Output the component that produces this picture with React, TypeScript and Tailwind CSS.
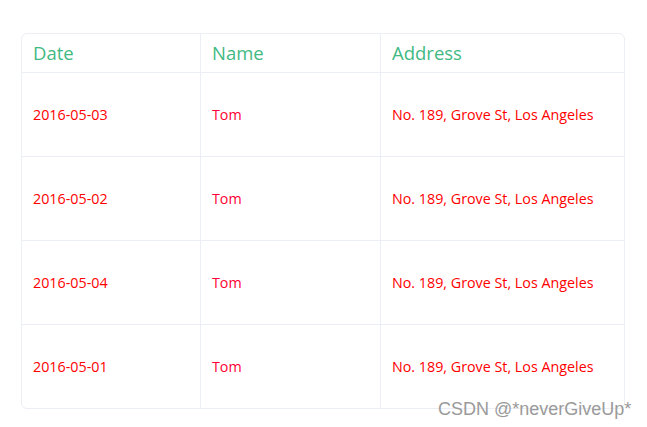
const rows = [
  { date: '2016-05-03', name: 'Tom', address: 'No. 189, Grove St, Los Angeles' },
  { date: '2016-05-02', name: 'Tom', address: 'No. 189, Grove St, Los Angeles' },
  { date: '2016-05-04', name: 'Tom', address: 'No. 189, Grove St, Los Angeles' },
  { date: '2016-05-01', name: 'Tom', address: 'No. 189, Grove St, Los Angeles' },
];

export default function App() {
  return (
    <div className="relative w-[647px] h-[427px] bg-white overflow-hidden" style={{ fontFamily: '"Open Sans", "Noto Sans", sans-serif' }}>
      <div className="pt-[33px] pl-[21px]">
        <table className="w-[604px] border-separate border-spacing-0 border border-[#ebeef5] rounded-[6px] table-fixed">
          <colgroup>
            <col className="w-[179px]" />
            <col className="w-[180px]" />
            <col />
          </colgroup>
          <thead>
            <tr className="h-[39px]">
              {['Date', 'Name', 'Address'].map((h, i) => (
                <th
                  key={h}
                  className={`text-left font-normal text-[18.5px] text-[#42b983] px-[11px] border-b border-[#ebeef5] ${i < 2 ? 'border-r' : ''}`}
                >
                  {h}
                </th>
              ))}
            </tr>
          </thead>
          <tbody>
            {rows.map((r, idx) => (
              <tr key={idx} className={idx < 3 ? 'h-[84px]' : 'h-[83px]'}>
                <td className={`px-[11px] text-[14.3px] text-[#ff0000] border-r border-[#ebeef5] ${idx < 3 ? 'border-b' : ''}`}>{r.date}</td>
                <td className={`px-[11px] text-[14.3px] text-[#ff0033] border-r border-[#ebeef5] ${idx < 3 ? 'border-b' : ''}`}>{r.name}</td>
                <td className={`px-[11px] text-[14.3px] text-[#ff0000] border-[#ebeef5] ${idx < 3 ? 'border-b' : ''}`}>{r.address}</td>
              </tr>
            ))}
          </tbody>
        </table>
      </div>
      <div
        className="absolute left-[438px] top-[396px] text-[18px] text-[#9a9a9a]"
        style={{ fontFamily: '"Liberation Sans", Arial, sans-serif' }}
      >
        CSDN @*neverGiveUp*
      </div>
    </div>
  );
}
